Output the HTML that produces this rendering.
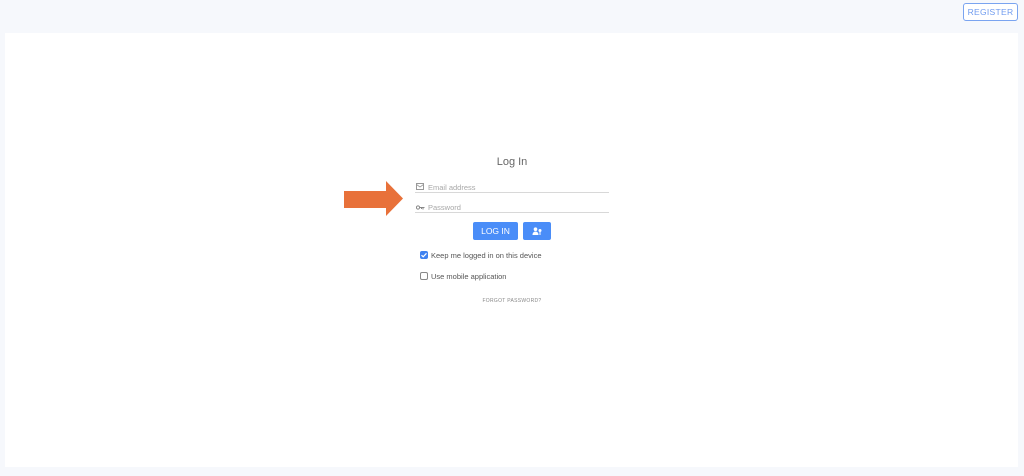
<!DOCTYPE html>
<html><head><meta charset="utf-8"><style>
*{margin:0;padding:0;box-sizing:border-box}
body{width:1024px;height:476px;background:#f6f8fc;font-family:"Liberation Sans",sans-serif;position:relative;overflow:hidden}
.card{position:absolute;left:5px;top:33px;width:1013px;height:434px;background:#fff}
.reg{position:absolute;left:963px;top:3px;width:55px;height:18px;border:1px solid #7aa4f0;border-radius:3px;color:#6f9bef;font-size:8.5px;text-align:center;line-height:16px;letter-spacing:.3px;background:#fff}
.t{position:absolute;left:0;width:1024px;text-align:center}
.field{position:absolute;left:415px;width:194px;height:1px;background:#d8d8d8}
.ph{position:absolute;left:428px;font-size:7.5px;color:#a8a8a8}
.btn{position:absolute;top:222px;height:18px;background:#4a8df8;border-radius:2px;color:#fff;font-size:8.5px;text-align:center;line-height:18px}
.cb{position:absolute;left:420px;width:8px;height:8px;border-radius:2px}
.lbl{position:absolute;left:431px;font-size:7.5px;color:#555}
</style></head><body>
<div class="reg">REGISTER</div>
<div class="card"></div>
<div class="t" style="top:156px;font-size:11px;color:#666">Log In</div>
<svg style="position:absolute;left:416px;top:183px" width="8" height="7" viewBox="0 0 8 7"><rect x=".5" y=".5" width="7" height="6" fill="none" stroke="#999" stroke-width="1"/><path d="M.5 1.5L4 4l3.5-2.5" fill="none" stroke="#999" stroke-width=".8"/></svg>
<div class="ph" style="top:183px">Email address</div>
<div class="field" style="top:192px"></div>
<svg style="position:absolute;left:416px;top:205px" width="9" height="5" viewBox="0 0 9 5"><circle cx="2" cy="2.5" r="1.6" fill="none" stroke="#888" stroke-width="1"/><path d="M3.5 2.5H8.5M7 2.5V4.5M5.5 2.5V4" stroke="#888" stroke-width="1" fill="none"/></svg>
<div class="ph" style="top:203px">Password</div>
<div class="field" style="top:212px"></div>
<svg style="position:absolute;left:344px;top:181px" width="60" height="36" viewBox="0 0 60 36"><path d="M0 10H42V0L59 17.5L42 35V27H0Z" fill="#e8713a"/></svg>
<div class="btn" style="left:473px;width:45px">LOG IN</div>
<div class="btn" style="left:523px;width:28px"><svg width="10" height="9" viewBox="0 0 10 9" style="margin-top:5px"><circle cx="3.5" cy="2.2" r="1.8" fill="#fff"/><path d="M0.5 8C0.5 5.5 2 4.5 3.5 4.5S6.5 5.5 6.5 8Z" fill="#fff"/><circle cx="8" cy="3.5" r="1.5" fill="#fff"/><rect x="7.5" y="4" width="1" height="4" fill="#fff"/></svg></div>
<div class="cb" style="top:251px;background:#3f82f0"><svg width="8" height="8" viewBox="0 0 8 8" style="display:block"><path d="M1.5 4.2L3.2 5.8L6.5 2.3" stroke="#fff" stroke-width="1.2" fill="none"/></svg></div>
<div class="lbl" style="top:251px">Keep me logged in on this device</div>
<div class="cb" style="top:272px;border:1px solid #888"></div>
<div class="lbl" style="top:272px">Use mobile application</div>
<div class="t" style="top:298px;font-size:5px;color:#888;letter-spacing:.3px">FORGOT PASSWORD?</div>
</body></html>
